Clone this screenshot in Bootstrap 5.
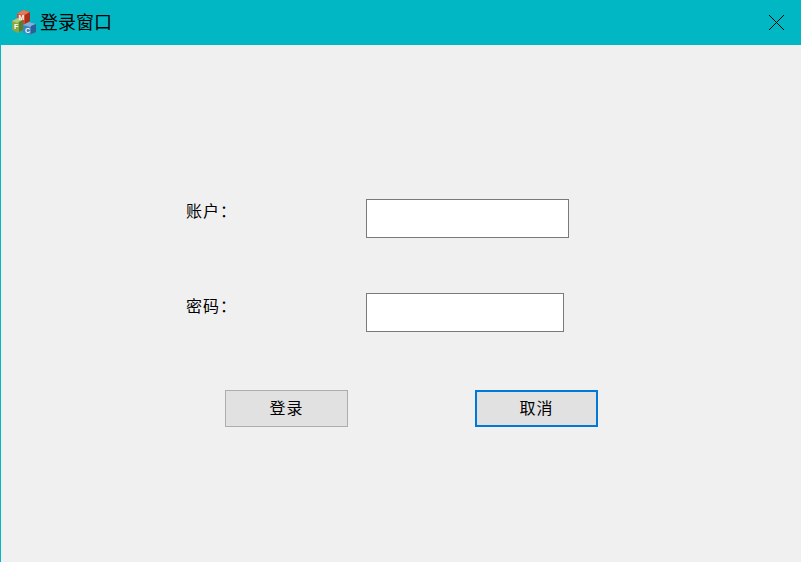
<!DOCTYPE html>
<html lang="zh-CN">
<head>
    <meta charset="UTF-8">
    <meta name="viewport" content="width=device-width, initial-scale=1">
    <title>登录窗口</title>
    <link href="https://cdn.jsdelivr.net/npm/bootstrap@5.3.2/dist/css/bootstrap.min.css" rel="stylesheet">
    <style>
        html, body {
          height: 100%;
          overflow: hidden;
        }
        body {
          background: #f0f0f0;
          color: #000;
          font-family: "Liberation Sans", "Noto Sans CJK SC", sans-serif;
        }
        .login-window {
          height: 100%;
          border-left: 1px solid #00b7c3;
        }
        .title-strip {
          height: 45px;
          background: #00b7c3;
          padding: 0 15px 0 10px;
        }
        .title-text {
          font-size: 18px;
          line-height: 1;
          margin-left: 3px;
        }
        .close-btn {
          width: 20px;
          height: 20px;
          padding: 2px;
          border: 0;
          background: transparent;
          line-height: 0;
        }
        .login-body {
          padding: 154px 0 0 185px;
        }
        .field-row {
          height: 39px;
          margin-bottom: 55px;
        }
        .field-label {
          width: 180px;
          margin: 0;
          font-size: 16px;
          letter-spacing: 1px;
          line-height: 26px;
        }
        .label-low {
          padding-top: 1px;
        }
        .field-input {
          height: 39px;
          padding: 2px 4px;
          border: 1px solid #7a7a7a;
          border-radius: 0;
          background: #fff;
        }
        .input-account { width: 203px; }
        .input-password { width: 198px; }
        .button-row {
          margin-top: 58px;
          padding-left: 39px;
          gap: 127px;
        }
        .win-btn {
          width: 123px;
          height: 37px;
          padding: 0;
          border: 1px solid #adadad;
          border-radius: 0;
          background: #e1e1e1;
          color: #000;
          font-size: 16px;
          letter-spacing: 1px;
        }
        .win-btn-focus {
          border: 2px solid #0078d7;
        }
    </style>
</head>
<body>
<div class="login-window d-flex flex-column">
  <!-- title bar -->
  <div class="title-strip d-flex align-items-center">
    <svg width="26" height="25" viewBox="0 0 26 25">
      <!-- red cube -->
      <polygon points="6,4 12,0 19,2 19,11 13,15 6,12" fill="#d9442a"/>
      <polygon points="6,4 12,0 19,2 13,5" fill="#e2785c"/>
      <polygon points="14,5 19,2 19,11 14,14" fill="#a8301c"/>
      <!-- green cube -->
      <polygon points="1,11 7,8 12,10 12,20 7,23 1,20" fill="#86a84a"/>
      <polygon points="1,11 7,8 12,10 6,13" fill="#b3c97c"/>
      <polygon points="8,12 12,10 12,20 8,22" fill="#55802f"/>
      <!-- blue cube -->
      <polygon points="12,15 18,12 25,14 25,22 19,25 12,22" fill="#3f83bf"/>
      <polygon points="12,15 18,12 25,14 19,17" fill="#7fb0d8"/>
      <polygon points="20,16 25,14 25,22 20,24" fill="#28609a"/>
      <text x="7.5" y="10" font-size="7" font-weight="700" fill="#fff" font-family="Liberation Sans">M</text>
      <text x="3" y="19" font-size="7" font-weight="700" fill="#fff" font-family="Liberation Sans">F</text>
      <text x="14" y="23" font-size="7" font-weight="700" fill="#fff" font-family="Liberation Sans">C</text>
    </svg>
    <span class="title-text">登录窗口</span>
    <button type="button" class="close-btn ms-auto" aria-label="关闭">
      <svg width="16" height="16" viewBox="0 0 16 16" shape-rendering="crispEdges">
        <path d="M1 0L16 15M16 0L1 15" stroke="#000" stroke-width="1" fill="none"/>
      </svg>
    </button>
  </div>

  <!-- login form -->
  <form class="login-body flex-grow-1">
    <div class="field-row d-flex">
      <label class="field-label" for="account">账户：</label>
      <input id="account" type="text" class="field-input form-control input-account">
    </div>
    <div class="field-row d-flex">
      <label class="field-label label-low" for="password">密码：</label>
      <input id="password" type="password" class="field-input form-control input-password">
    </div>
    <div class="button-row d-flex">
      <button type="button" class="btn win-btn">登录</button>
      <button type="button" class="btn win-btn win-btn-focus">取消</button>
    </div>
  </form>
</div>
</body>
</html>
